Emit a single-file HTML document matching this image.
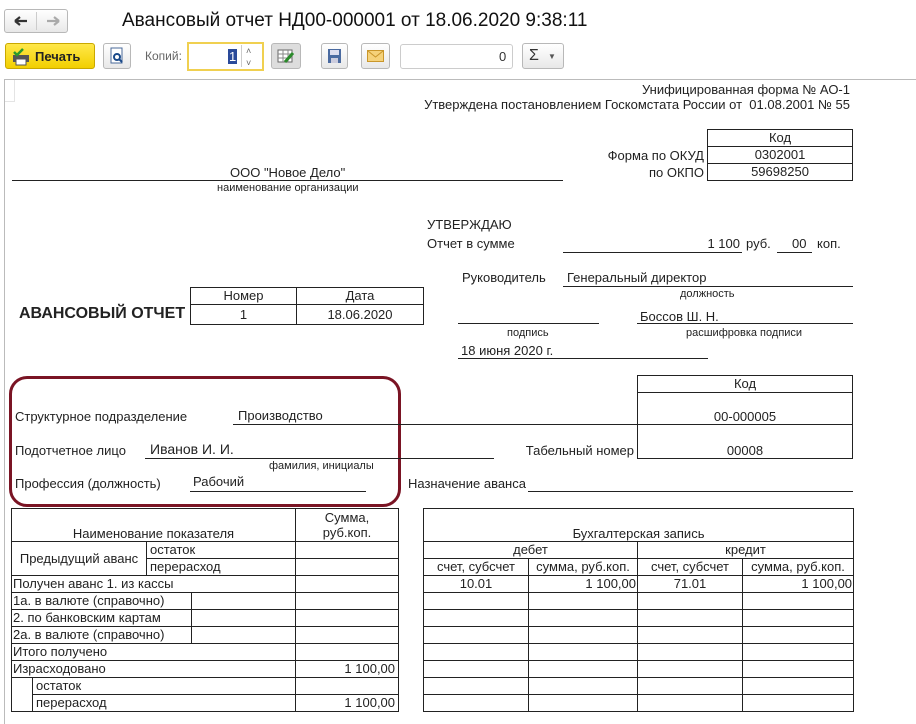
<!DOCTYPE html>
<html><head><meta charset="utf-8"><style>
*{margin:0;padding:0;box-sizing:border-box}
body{width:916px;height:724px;background:#fff;position:relative;overflow:hidden;font-family:"Liberation Sans",Arial,sans-serif;color:#222}
.t{position:absolute;font-size:13px;line-height:15px;white-space:nowrap}
.s{font-size:11px;line-height:12px}
.h{position:absolute;height:0;border-top:1px solid #222}
.btn{position:absolute;border:1px solid #b8b8b8;border-radius:3px;background:linear-gradient(#fff,#e8e8e8)}
table{position:absolute;border-collapse:collapse;font-size:13px;table-layout:fixed}
td{border:1px solid #222;height:17px;padding:0 3px;line-height:14px;white-space:nowrap;overflow:hidden}
.c{text-align:center}.r{text-align:right}
</style></head><body>
<!-- toolbar -->
<div class="btn" style="left:4px;top:9px;width:64px;height:24px"></div>
<div style="position:absolute;left:36px;top:12px;height:18px;border-left:1px solid #ccc"></div>
<svg style="position:absolute;left:13px;top:14px" width="16" height="14"><path d="M2 7h12M2 7l5-4M2 7l5 4" stroke="#333" stroke-width="2.2" fill="none"/></svg>
<svg style="position:absolute;left:45px;top:14px" width="16" height="14"><path d="M2 7h12M14 7l-5-4M14 7l-5 4" stroke="#aaa" stroke-width="2.2" fill="none"/></svg>
<div class="t" style="left:122px;top:9px;font-size:19px;line-height:24px;color:#111">Авансовый отчет НД00-000001 от 18.06.2020 9:38:11</div>

<div class="btn" style="left:5px;top:43px;width:90px;height:26px;background:linear-gradient(#ffe84a,#f2cf00);border-color:#c9a800"></div>
<svg style="position:absolute;left:11px;top:47px" width="20" height="20" viewBox="0 0 20 20"><rect x="2" y="8" width="16" height="7" fill="#555"/><rect x="5" y="12" width="10" height="6" fill="#fff" stroke="#555"/><path d="M3 5l3 3 6-6" stroke="#2a9a2a" stroke-width="2.5" fill="none"/></svg>
<div class="t" style="left:35px;top:49px;font-size:13px;font-weight:bold;color:#222">Печать</div>
<div class="btn" style="left:103px;top:43px;width:28px;height:26px"></div>
<svg style="position:absolute;left:109px;top:47px" width="16" height="18"><rect x="2" y="1" width="11" height="15" fill="#fff" stroke="#4a6a9a"/><circle cx="8" cy="10" r="3" fill="none" stroke="#1a4a8a" stroke-width="2"/><path d="M10 12l3 3" stroke="#1a4a8a" stroke-width="2"/></svg>
<div class="t" style="left:145px;top:49px;color:#666;font-size:12px">Копий:</div>
<div style="position:absolute;left:187px;top:42px;width:77px;height:29px;border:2px solid #f0d050;background:#fff"></div>
<div class="t" style="left:228px;top:49px;font-size:13px;background:#2a4a9a;color:#fff;padding:0 1px">1</div>
<div style="position:absolute;left:241px;top:45px;height:22px;border-left:1px solid #ccc"></div>
<div class="t" style="left:246px;top:44px;font-size:9px;color:#666">˄</div>
<div class="t" style="left:246px;top:56px;font-size:9px;color:#666">˅</div>
<div class="btn" style="left:271px;top:43px;width:30px;height:26px;background:#ddd"></div>
<svg style="position:absolute;left:277px;top:47px" width="18" height="18"><rect x="1" y="3" width="14" height="12" fill="#fff" stroke="#666"/><path d="M1 7h14M1 11h14M6 3v12M11 3v12" stroke="#888"/><path d="M8 15l8-9" stroke="#2a8a2a" stroke-width="3"/></svg>
<div class="btn" style="left:321px;top:43px;width:27px;height:26px"></div>
<svg style="position:absolute;left:327px;top:48px" width="15" height="16"><rect x="1" y="1" width="13" height="14" fill="#4a6aa0"/><rect x="3" y="2" width="9" height="5" fill="#dde"/><rect x="4" y="10" width="7" height="5" fill="#ccd"/></svg>
<div class="btn" style="left:361px;top:43px;width:29px;height:26px"></div>
<svg style="position:absolute;left:367px;top:50px" width="17" height="12"><rect x="0.5" y="0.5" width="16" height="11" fill="#f5d27a" stroke="#c9962a"/><path d="M1 1l7.5 6 7.5-6" stroke="#c9962a" fill="none"/></svg>
<div style="position:absolute;left:400px;top:44px;width:113px;height:25px;border:1px solid #ccc;border-radius:3px"></div>
<div class="t" style="left:499px;top:49px;font-size:13px;color:#333">0</div>
<div class="btn" style="left:522px;top:43px;width:42px;height:26px"></div>
<div class="t" style="left:529px;top:47px;font-size:16px;line-height:18px;color:#333">Σ</div>
<div class="t" style="left:548px;top:49px;font-size:8px;color:#555">▼</div>

<!-- document frame -->
<div style="position:absolute;left:4px;top:79px;width:912px;height:645px;border-left:1px solid #bbb;border-top:1px solid #bbb"></div>
<div style="position:absolute;left:5px;top:80px;width:10px;height:22px;border-right:1px solid #e4e4e4;border-bottom:1px solid #e4e4e4"></div>

<div class="t" style="right:66px;top:82px">Унифицированная форма № АО-1</div>
<div class="t" style="right:66px;top:97px">Утверждена постановлением Госкомстата России от&nbsp; 01.08.2001 № 55</div>
<table style="left:707px;top:129px;width:146px"><tr><td class="c">Код</td></tr><tr><td class="c">0302001</td></tr><tr><td class="c">59698250</td></tr></table>
<div class="t" style="right:212px;top:148px">Форма по ОКУД</div>
<div class="t" style="right:212px;top:165px">по ОКПО</div>
<div class="t" style="left:230px;top:165px">ООО "Новое Дело"</div>
<div class="h" style="left:12px;top:180px;width:551px"></div>
<div class="t s" style="left:217px;top:182px">наименование организации</div>

<div class="t" style="left:427px;top:217px;font-size:13px">УТВЕРЖДАЮ</div>
<div class="t" style="left:427px;top:236px;font-size:13px">Отчет в сумме</div>
<div class="h" style="left:563px;top:252px;width:179px"></div>
<div class="t" style="right:176px;top:236px;font-size:13px">1 100</div>
<div class="t" style="left:746px;top:236px;font-size:13px">руб.</div>
<div class="h" style="left:777px;top:252px;width:35px"></div>
<div class="t" style="left:792px;top:236px;font-size:13px">00</div>
<div class="t" style="left:817px;top:236px;font-size:13px">коп.</div>
<div class="t" style="left:462px;top:270px;font-size:13px">Руководитель</div>
<div class="t" style="left:567px;top:270px;font-size:13px">Генеральный директор</div>
<div class="h" style="left:563px;top:286px;width:290px"></div>
<div class="t s" style="left:680px;top:288px">должность</div>
<div class="h" style="left:458px;top:323px;width:141px"></div>
<div class="t" style="left:640px;top:309px;font-size:13px">Боссов Ш. Н.</div>
<div class="h" style="left:637px;top:323px;width:216px"></div>
<div class="t s" style="left:507px;top:327px">подпись</div>
<div class="t s" style="left:686px;top:327px">расшифровка подписи</div>
<div class="t" style="left:461px;top:343px">18 июня 2020 г.</div>
<div class="h" style="left:458px;top:358px;width:250px"></div>

<div class="t" style="left:19px;top:305px;font-size:16px;line-height:18px;font-weight:bold">АВАНСОВЫЙ ОТЧЕТ</div>
<table style="left:190px;top:287px;width:233px"><col style="width:106px"><col style="width:127px">
<tr><td class="c">Номер</td><td class="c">Дата</td></tr><tr><td class="c" style="height:20px">1</td><td class="c" style="height:20px">18.06.2020</td></tr></table>

<table style="left:637px;top:375px;width:216px"><tr><td class="c">Код</td></tr><tr><td class="c" style="height:32px;vertical-align:bottom">00-000005</td></tr><tr><td class="c" style="height:34px;vertical-align:bottom">00008</td></tr></table>

<div style="position:absolute;left:9px;top:376px;width:392px;height:131px;border:3px solid #7a1424;border-radius:18px"></div>
<div class="t" style="left:15px;top:409px">Структурное подразделение</div>
<div class="t" style="left:238px;top:408px;font-size:13px">Производство</div>
<div class="h" style="left:233px;top:424px;width:404px"></div>
<div class="t" style="left:15px;top:443px">Подотчетное лицо</div>
<div class="t" style="left:150px;top:441px;font-size:14px;line-height:16px">Иванов И. И.</div>
<div class="h" style="left:145px;top:458px;width:349px"></div>
<div class="t s" style="left:269px;top:460px">фамилия, инициалы</div>
<div class="t" style="right:282px;top:443px">Табельный номер</div>
<div class="t" style="left:15px;top:476px">Профессия (должность)</div>
<div class="t" style="left:193px;top:474px;font-size:13px">Рабочий</div>
<div class="h" style="left:190px;top:491px;width:176px"></div>
<div class="t" style="left:408px;top:476px">Назначение аванса</div>
<div class="h" style="left:528px;top:491px;width:325px"></div>

<table style="left:11px;top:508px;width:387px">
<col style="width:21px"><col style="width:114px"><col style="width:45px"><col style="width:104px"><col style="width:103px">
<tr><td colspan="4" class="c" style="height:33px;vertical-align:bottom">Наименование показателя</td><td class="c" style="line-height:15px">Сумма,<br>руб.коп.</td></tr>
<tr><td colspan="2" rowspan="2" class="c">Предыдущий аванс</td><td colspan="2">остаток</td><td></td></tr>
<tr><td colspan="2">перерасход</td><td></td></tr>
<tr><td colspan="4" style="padding-left:1px">Получен аванс 1. из кассы</td><td></td></tr>
<tr><td colspan="3" style="padding-left:1px">1а. в валюте (справочно)</td><td></td><td></td></tr>
<tr><td colspan="3" style="padding-left:1px">2. по банковским картам</td><td></td><td></td></tr>
<tr><td colspan="3" style="padding-left:1px">2а. в валюте (справочно)</td><td></td><td></td></tr>
<tr><td colspan="4" style="padding-left:1px">Итого получено</td><td></td></tr>
<tr><td colspan="4" style="padding-left:1px">Израсходовано</td><td class="r">1 100,00</td></tr>
<tr><td rowspan="2"></td><td colspan="3">остаток</td><td></td></tr>
<tr><td colspan="3">перерасход</td><td class="r">1 100,00</td></tr>
</table>

<table style="left:423px;top:508px;width:430px">
<col style="width:105px"><col style="width:109px"><col style="width:105px"><col style="width:111px">
<tr><td colspan="4" class="c" style="height:33px;vertical-align:bottom">Бухгалтерская запись</td></tr>
<tr><td colspan="2" class="c">дебет</td><td colspan="2" class="c">кредит</td></tr>
<tr><td class="c" style="padding:0">счет, субсчет</td><td class="c" style="padding:0">сумма, руб.коп.</td><td class="c" style="padding:0">счет, субсчет</td><td class="c" style="padding:0">сумма, руб.коп.</td></tr>
<tr><td class="c">10.01</td><td class="r" style="padding-right:1px">1 100,00</td><td class="c">71.01</td><td class="r" style="padding-right:1px">1 100,00</td></tr>
<tr><td></td><td></td><td></td><td></td></tr>
<tr><td></td><td></td><td></td><td></td></tr>
<tr><td></td><td></td><td></td><td></td></tr>
<tr><td></td><td></td><td></td><td></td></tr>
<tr><td></td><td></td><td></td><td></td></tr>
<tr><td></td><td></td><td></td><td></td></tr>
<tr><td></td><td></td><td></td><td></td></tr>
</table>
</body></html>
